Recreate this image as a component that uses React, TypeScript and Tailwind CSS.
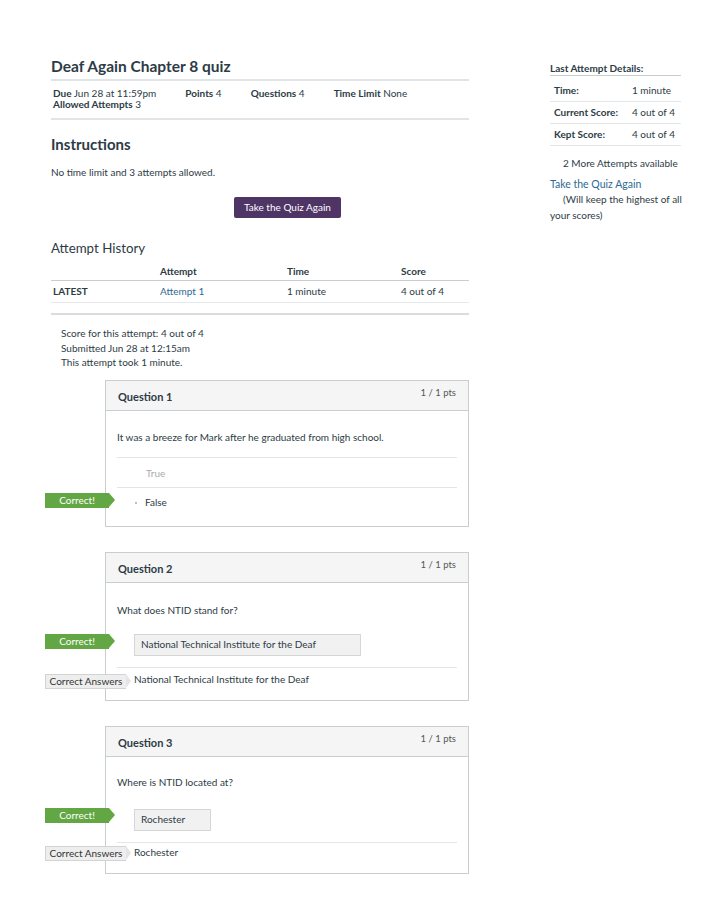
import React from "react";

const font = { fontFamily: "Lato, 'Open Sans', sans-serif" };

type BadgeProps = { kind: "correct" | "answers"; top: number };

// Flag that sticks out on the left edge of a question card
const Flag = ({ kind, top }: BadgeProps) => {
  if (kind === "correct") {
    return (
      <div className="absolute left-[-61px] flex items-center" style={{ top }}>
        <div className="flex h-[15px] w-[64px] items-center justify-center bg-[#62a744] text-[10px] text-white">
          Correct!
        </div>
        <div className="h-0 w-0 border-y-[7.5px] border-l-[6px] border-y-transparent border-l-[#62a744]" />
      </div>
    );
  }
  return (
    <div className="absolute left-[-61px] flex items-center" style={{ top }}>
      <div className="flex h-[15px] w-[81px] items-center justify-center border border-r-0 border-[#d3d3d3] bg-[#eeeeee] text-[10px] text-[#333]">
        Correct Answers
      </div>
      <div className="h-0 w-0 border-y-[7.5px] border-l-[5px] border-y-transparent border-l-[#e4e4e4]" />
    </div>
  );
};

const CardHeader = ({ n }: { n: number }) => (
  <div className="flex h-[30px] items-start justify-between border-b border-[#c7cdd1] bg-[#f5f5f5] px-[12px]">
    <span className="mt-[8px] text-[11px] font-bold text-[#2d3b45]">Question {n}</span>
    <span className="mt-[5px] text-[9.5px] text-[#555]">1 / 1 pts</span>
  </div>
);

export default function App() {
  return (
    <div className="min-h-screen bg-white text-[#2d3b45]" style={font}>
      <div className="flex pl-[51px] pt-[56px]">
        {/* main column */}
        <div className="w-[418px] shrink-0">
          <h1 className="text-[15.5px] font-bold leading-[20px] text-[#2d3b45]">Deaf Again Chapter 8 quiz</h1>
          <div className="mt-[3px] h-[2px] bg-[#e2e5e8]" />
          <div className="flex flex-wrap pl-[2px] pt-[7px] text-[10px] leading-[11px]">
            <span className="mr-[29px]"><b>Due</b> Jun 28 at 11:59pm</span>
            <span className="mr-[29px]"><b>Points</b> 4</span>
            <span className="mr-[29px]"><b>Questions</b> 4</span>
            <span className="mr-[29px]"><b>Time Limit</b> None</span>
            <span className="mr-[29px]"><b>Allowed Attempts</b> 3</span>
          </div>
          <div className="mt-[8px] h-[2px] bg-[#e2e5e8]" />

          <h2 className="mt-[15px] text-[15px] font-bold leading-[18px]">Instructions</h2>
          <p className="mt-[13px] text-[10px] leading-[12px]">No time limit and 3 attempts allowed.</p>

          <div className="mt-[19px] flex">
            <button className="ml-[183px] h-[21px] rounded-[2px] bg-[#4f3466] px-[10px] text-[10px] text-white">
              Take the Quiz Again
            </button>
          </div>

          <h3 className="mt-[22px] text-[13.3px] leading-[17px]">Attempt History</h3>
          <div className="mt-[9px] grid grid-cols-[107px_127px_114px_1fr] pl-[2px] text-[10px] font-bold leading-[11px]">
            <span />
            <span>Attempt</span>
            <span>Time</span>
            <span>Score</span>
          </div>
          <div className="mt-[3px] h-[1px] bg-[#c7cdd1]" />
          <div className="grid grid-cols-[107px_127px_114px_1fr] py-[5px] pl-[2px] text-[10px] leading-[11px]">
            <span className="font-bold">LATEST</span>
            <span className="text-[#2d6a93]">Attempt 1</span>
            <span>1 minute</span>
            <span>4 out of 4</span>
          </div>
          <div className="h-[1px] bg-[#e6e9eb]" />
          <div className="mt-[10px] h-[2px] bg-[#dadde0]" />

          <div className="mt-[11px] pl-[10px] text-[10px] leading-[14.5px]">
            <p>Score for this attempt: 4 out of 4</p>
            <p>Submitted Jun 28 at 12:15am</p>
            <p>This attempt took 1 minute.</p>
          </div>

          <div className="ml-[54px] mt-[10px] flex flex-col gap-[25px]">
            {/* Question 1 */}
            <div className="relative border border-[#c7cdd1]">
              <CardHeader n={1} />
              <div className="px-[11px] pb-[8px]">
                <p className="mt-[20px] text-[10px] leading-[12px]">
                  It was a breeze for Mark after he graduated from high school.
                </p>
                <div className="mt-[14px] h-[1px] bg-[#e3e6e8]" />
                <div className="flex h-[29px] items-center pl-[29px] pt-[2px] text-[10px] text-[#aaa]">True</div>
                <div className="h-[1px] bg-[#e3e6e8]" />
                <div className="flex h-[30px] items-center pl-[18px] text-[10px]">
                  <span className="mr-[8px] h-[2px] w-[2px] rounded-full bg-[#aaa]" />
                  False
                </div>
              </div>
              <Flag kind="correct" top={112} />
            </div>

            {/* Question 2 */}
            <div className="relative border border-[#c7cdd1]">
              <CardHeader n={2} />
              <div className="px-[11px] pb-[15px]">
                <p className="mt-[21px] text-[10px] leading-[12px]">What does NTID stand for?</p>
                <div className="ml-[17px] mt-[18px] flex h-[22px] w-[227px] items-center border border-[#d6d6d6] bg-[#f1f1f1] px-[6px] text-[10px]">
                  National Technical Institute for the Deaf
                </div>
                <div className="mt-[11px] h-[1px] bg-[#e3e6e8]" />
                <div className="mt-[5px] pl-[17px] text-[10px] leading-[12px]">
                  National Technical Institute for the Deaf
                </div>
              </div>
              <Flag kind="correct" top={81} />
              <Flag kind="answers" top={121} />
            </div>

            {/* Question 3 */}
            <div className="relative border border-[#c7cdd1]">
              <CardHeader n={3} />
              <div className="px-[11px] pb-[15px]">
                <p className="mt-[19px] text-[10px] leading-[12px]">Where is NTID located at?</p>
                <div className="ml-[17px] mt-[21px] flex h-[22px] w-[77px] items-center border border-[#d6d6d6] bg-[#f1f1f1] px-[6px] text-[10px]">
                  Rochester
                </div>
                <div className="mt-[11px] h-[1px] bg-[#e3e6e8]" />
                <div className="mt-[3px] pl-[17px] text-[10px] leading-[12px]">Rochester</div>
              </div>
              <Flag kind="correct" top={81} />
              <Flag kind="answers" top={119} />
            </div>
          </div>
          <div className="h-[40px]" />
        </div>

        {/* sidebar */}
        <div className="ml-[81px] mt-[6px] w-[136px] shrink-0 text-[10px]">
          <div className="w-[131px]">
            <h4 className="text-[10px] font-bold leading-[12px]">Last Attempt Details:</h4>
            <div className="mt-[1px] h-[1px] bg-[#c7cdd1]" />
            <div className="h-[4px]" />
            {[
              ["Time:", "1 minute"],
              ["Current Score:", "4 out of 4"],
              ["Kept Score:", "4 out of 4"],
            ].map(([k, v]) => (
              <div key={k} className="flex h-[22px] items-center border-b border-[#e3e6e8] pl-[4px]">
                <span className="w-[78px] font-bold">{k}</span>
                <span>{v}</span>
              </div>
            ))}
          </div>
          <p className="mt-[11px] pl-[13px] leading-[12px]">2 More Attempts available</p>
          <p className="mt-[9px] text-[10.5px] leading-[12px] text-[#2d6a93]">Take the Quiz Again</p>
          <p className="mt-[1px] indent-[13px] leading-[16px]">(Will keep the highest of all your scores)</p>
        </div>
      </div>
    </div>
  );
}
